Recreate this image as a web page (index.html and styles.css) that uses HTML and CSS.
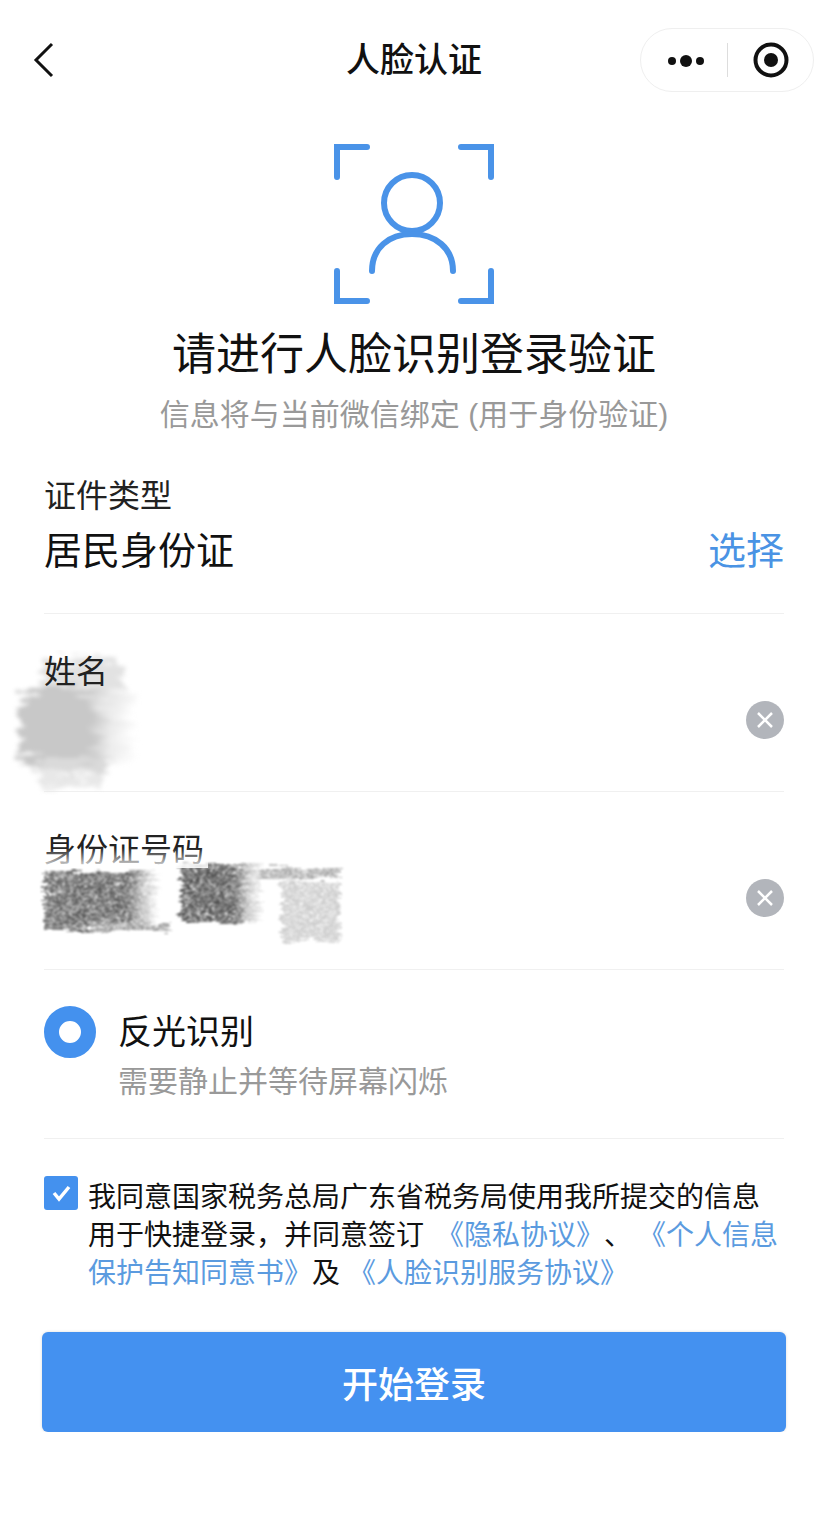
FILE: index.html
```html
<!DOCTYPE html>
<html lang="zh-CN">
    <head>
        <meta charset="UTF-8">
        <title>人脸认证</title>
        <link rel="stylesheet" href="styles.css">
    </head>

    <body>
        <header class="nav">
            <svg class="back-icon" width="22" height="36" viewBox="0 0 22 36">
                <path d="M19 2 L3 18 L19 34" fill="none" stroke="#111" stroke-width="3"/>
            </svg>
            <h1 class="nav-title">人脸认证</h1>
            <div class="capsule">
                <svg class="capsule-more" width="38" height="14" viewBox="0 0 38 14">
                    <circle cx="5" cy="7" r="4" fill="#111"/>
                    <circle cx="19" cy="7" r="6" fill="#111"/>
                    <circle cx="33" cy="7" r="4" fill="#111"/>
                </svg>
                <span class="capsule-line"></span>
                <svg class="capsule-close" width="36" height="36" viewBox="0 0 36 36">
                    <circle cx="18" cy="18" r="15.5" fill="none" stroke="#111" stroke-width="4"/>
                    <circle cx="18" cy="18" r="7" fill="#111"/>
                </svg>
            </div>
        </header>

        <main class="content">
            <section class="hero">
                <svg class="face-icon" width="160" height="160" viewBox="0 0 160 160" fill="none" stroke="#4a93e8" stroke-width="6" stroke-linecap="round">
                    <path d="M3 33 V3 H33"/>
                    <path d="M127 3 H157 V33"/>
                    <path d="M3 127 V157 H33"/>
                    <path d="M127 157 H157 V127"/>
                    <circle cx="78" cy="59" r="28"/>
                    <path d="M38 127 C38 104 55 90 78 90 S119 104 119 127"/>
                </svg>
                <h2 class="hero-title">请进行人脸识别登录验证</h2>
                <p class="hero-sub">信息将与当前微信绑定 (用于身份验证)</p>
            </section>

            <section class="field field-type">
                <div class="field-label">证件类型</div>
                <div class="type-row">
                    <span class="type-value">居民身份证</span>
                    <span class="type-select">选择</span>
                </div>
            </section>

            <section class="field">
                <svg class="scribble scribble-name" width="140" height="145" viewBox="0 0 140 145">
                    <defs>
                        <linearGradient id="fade-name">
                            <stop offset="0" stop-color="#c8c8c8"/>
                            <stop offset="0.6" stop-color="#c8c8c8"/>
                            <stop offset="0.78" stop-color="#ececec"/>
                            <stop offset="1" stop-color="#fff"/>
                        </linearGradient>
                    </defs>
                    <g filter="url(#smudge)">
                        <rect x="32" y="8" width="80" height="32" fill="#e2e2e2"/>
                        <rect x="10" y="40" width="116" height="72" fill="url(#fade-name)"/>
                        <rect x="28" y="108" width="66" height="14" fill="#dadada"/>
                        <rect x="30" y="124" width="62" height="13" fill="#e8e8e8"/>
                    </g>
                </svg>
                <div class="field-label">姓名</div>
                <div class="input-row">
                    <button class="clear-btn">
                        <svg width="38" height="38" viewBox="0 0 38 38">
                            <circle cx="19" cy="19" r="19" fill="#b2b5bb"/>
                            <path d="M12 12 L26 26 M26 12 L12 26" stroke="#fff" stroke-width="2.5"/>
                        </svg>
                    </button>
                </div>
            </section>

            <section class="field">
                <svg class="scribble scribble-id" width="340" height="90" viewBox="0 0 340 90">
                    <defs>
                        <linearGradient id="fade-dark">
                            <stop offset="0" stop-color="#606060"/>
                            <stop offset="0.72" stop-color="#505050"/>
                            <stop offset="0.88" stop-color="#c0c0c0"/>
                            <stop offset="1" stop-color="#fff"/>
                        </linearGradient>
                        <linearGradient id="fade-second">
                            <stop offset="0" stop-color="#484848"/>
                            <stop offset="0.65" stop-color="#505050"/>
                            <stop offset="0.85" stop-color="#c4c4c4"/>
                            <stop offset="1" stop-color="#f2f2f2"/>
                        </linearGradient>
                    </defs>
                    <g filter="url(#grain)">
                        <rect x="24" y="12" width="114" height="58" fill="url(#fade-dark)"/>
                        <rect x="70" y="62" width="80" height="9" fill="#9a9a9a"/>
                        <rect x="161" y="5" width="80" height="58" fill="url(#fade-second)"/>
                        <rect x="238" y="8" width="82" height="10" fill="#a8a8a8"/>
                        <rect x="262" y="22" width="58" height="60" fill="#cdcdcd"/>
                    </g>
                </svg>
                <div class="field-label">身份证号码</div>
                <span class="label-fade"></span>
                <div class="input-row">
                    <button class="clear-btn">
                        <svg width="38" height="38" viewBox="0 0 38 38">
                            <circle cx="19" cy="19" r="19" fill="#b2b5bb"/>
                            <path d="M12 12 L26 26 M26 12 L12 26" stroke="#fff" stroke-width="2.5"/>
                        </svg>
                    </button>
                </div>
            </section>

            <section class="mode">
                <span class="radio"></span>
                <div class="mode-text">
                    <div class="mode-title">反光识别</div>
                    <div class="mode-sub">需要静止并等待屏幕闪烁</div>
                </div>
            </section>

            <section class="agree">
                <span class="check">
                    <svg width="34" height="34" viewBox="0 0 34 34">
                        <path d="M10 17 L15 23 L25 11" fill="none" stroke="#fff" stroke-width="3.5"/>
                    </svg>
                </span>
                <p class="agree-text">我同意国家税务总局广东省税务局使用我所提交的信息用于快捷登录，并同意签订<a class="link link-first">《隐私协议》</a>、<a class="link link-second">《个人信息保护告知同意书》</a>及<a class="link">《人脸识别服务协议》</a></p>
            </section>

            <button class="start-btn">开始登录</button>
        </main>

        <!-- shared filters for the smudged out name and id number -->
        <svg class="filter-defs" width="0" height="0">
            <filter id="smudge" x="-10%" y="-10%" width="120%" height="120%" color-interpolation-filters="sRGB">
                <feTurbulence type="fractalNoise" baseFrequency="0.03 0.16" numOctaves="4" seed="4"/>
                <feDisplacementMap in="SourceGraphic" scale="30" xChannelSelector="R" yChannelSelector="G"/>
                <feGaussianBlur stdDeviation="2"/>
            </filter>
            <filter id="grain" x="-5%" y="-10%" width="110%" height="120%" color-interpolation-filters="sRGB">
                <feTurbulence type="fractalNoise" baseFrequency="0.3 0.9" numOctaves="3" seed="5" result="noise"/>
                <feColorMatrix in="noise" type="matrix" values="0 0 0 0 0  0 0 0 0 0  0 0 0 0 0  2.6 0 0 0 -0.55" result="mask"/>
                <feComposite in="SourceGraphic" in2="mask" operator="in" result="grainy"/>
                <feTurbulence type="fractalNoise" baseFrequency="0.04 0.3" numOctaves="3" seed="9" result="wobble"/>
                <feDisplacementMap in="grainy" in2="wobble" scale="16" xChannelSelector="R" yChannelSelector="G"/>
                <feGaussianBlur stdDeviation="1"/>
            </filter>
        </svg>
    </body>
</html>
```

FILE: styles.css
```css
* {
    box-sizing: border-box;
}

body {
    margin: 0;
    background-color: white;
    color: #111;
    font-family: "Liberation Sans", "Noto Sans CJK SC", sans-serif;
}

.nav {
    display: grid;
    grid-template-columns: minmax(0, 1fr) auto minmax(0, 1fr);
    align-items: center;
    height: 120px;
    padding: 28px 14px;
}

.back-icon {
    display: block;
    margin-left: 19px;
}

.nav-title {
    margin: 0;
    font-size: 34px;
    line-height: 64px;
    font-weight: 500;
}

.capsule {
    justify-self: end;
    display: flex;
    align-items: center;
    width: 174px;
    height: 64px;
    padding-left: 26px;
    border: 1px solid #efefef;
    border-radius: 32px;
}

.capsule-more {
    margin-top: 2px;
}

.capsule-line {
    width: 1px;
    height: 34px;
    margin-left: 22px;
    background-color: #ddd;
}

.capsule-close {
    margin-left: 25px;
}

.content {
    padding: 0 44px;
}

.hero {
    padding-top: 24px;
    text-align: center;
}

.face-icon {
    display: block;
    margin: 0 auto;
}

.hero-title {
    margin: 21px 0 0;
    font-size: 44px;
    line-height: 60px;
    font-weight: 400;
}

.hero-sub {
    margin: 10px 0 0;
    color: #999;
    font-size: 30px;
    line-height: 40px;
}

.field {
    position: relative;
    padding: 38px 0 46px;
    border-bottom: 1px solid #f0f0f0;
}

.field-type {
    padding-top: 41px;
    padding-bottom: 37px;
}

.field-label {
    position: relative;
    color: #222;
    font-size: 32px;
    line-height: 40px;
}

.label-fade {
    position: absolute;
    left: 0;
    top: 56px;
    width: 164px;
    height: 20px;
    background: linear-gradient(rgba(255,255,255,0), rgba(255,255,255,0.9));
}

.type-row {
    display: flex;
    justify-content: space-between;
    margin-top: 10px;
    font-size: 38px;
    line-height: 50px;
}

.type-select {
    color: #4a93e4;
}

.input-row {
    display: flex;
    justify-content: flex-end;
    align-items: center;
    height: 50px;
    margin-top: 3px;
}

.clear-btn {
    display: block;
    width: 38px;
    height: 38px;
    padding: 0;
    border: none;
    background: transparent;
}

.scribble {
    position: absolute;
    pointer-events: none;
}

.scribble-name {
    left: -34px;
    top: 36px;
}

.scribble-id {
    left: -24px;
    top: 68px;
}

.filter-defs {
    position: absolute;
}

.mode {
    display: flex;
    padding: 36px 0 36px;
    border-bottom: 1px solid #f0f0f0;
}

.radio {
    flex-shrink: 0;
    width: 52px;
    height: 52px;
    border: 15px solid #4491ee;
    border-radius: 50%;
}

.mode-text {
    margin: 2px 0 0 22px;
}

.mode-title {
    font-size: 34px;
    line-height: 48px;
}

.mode-sub {
    margin-top: 6px;
    color: #999;
    font-size: 30px;
    line-height: 40px;
}

.agree {
    display: flex;
    gap: 10px;
    margin-top: 37px;
}

.check {
    flex-shrink: 0;
    width: 34px;
    height: 34px;
    border-radius: 3px;
    background-color: #4491ee;
}

.check svg {
    display: block;
}

.agree-text {
    flex: 1;
    margin: 3px 0 0;
    font-size: 28px;
    line-height: 38px;
    text-spacing-trim: space-all;
}

.link {
    margin-left: 8px;
    color: #5b9bdf;
}

.link-first {
    margin-left: 12px;
}

.link-second {
    margin-left: 6px;
}

.start-btn {
    display: block;
    width: 744px;
    height: 100px;
    margin: 39px -2px 0;
    border: none;
    border-radius: 6px;
    background-color: #4491f0;
    box-shadow: 0 0 3px rgba(0,0,0,0.15);
    color: white;
    font-family: inherit;
    font-size: 36px;
    font-weight: 500;
}
```
